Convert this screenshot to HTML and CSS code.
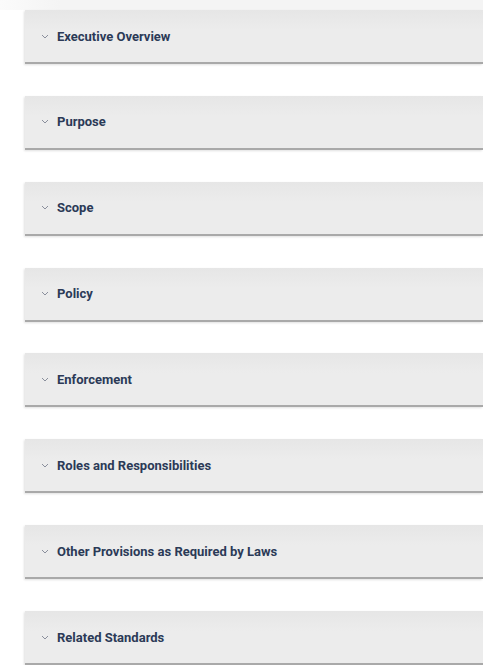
FILE: index.html
```html
<!DOCTYPE html>
<html lang="en">
<head>
<meta charset="utf-8">
<link rel="stylesheet" href="styles.css">
</head>
<body>
<div class="topshade"></div>
<div class="list">
  <div class="item"><span class="chev"><svg width="8" height="5" viewBox="0 0 8 5"><path d="M1 1l3 3 3-3" fill="none" stroke="#8a8f9c" stroke-width="1"/></svg></span><span class="title">Executive Overview</span></div>
  <div class="item"><span class="chev"><svg width="8" height="5" viewBox="0 0 8 5"><path d="M1 1l3 3 3-3" fill="none" stroke="#8a8f9c" stroke-width="1"/></svg></span><span class="title">Purpose</span></div>
  <div class="item"><span class="chev"><svg width="8" height="5" viewBox="0 0 8 5"><path d="M1 1l3 3 3-3" fill="none" stroke="#8a8f9c" stroke-width="1"/></svg></span><span class="title">Scope</span></div>
  <div class="item"><span class="chev"><svg width="8" height="5" viewBox="0 0 8 5"><path d="M1 1l3 3 3-3" fill="none" stroke="#8a8f9c" stroke-width="1"/></svg></span><span class="title">Policy</span></div>
  <div class="item"><span class="chev"><svg width="8" height="5" viewBox="0 0 8 5"><path d="M1 1l3 3 3-3" fill="none" stroke="#8a8f9c" stroke-width="1"/></svg></span><span class="title">Enforcement</span></div>
  <div class="item"><span class="chev"><svg width="8" height="5" viewBox="0 0 8 5"><path d="M1 1l3 3 3-3" fill="none" stroke="#8a8f9c" stroke-width="1"/></svg></span><span class="title">Roles and Responsibilities</span></div>
  <div class="item"><span class="chev"><svg width="8" height="5" viewBox="0 0 8 5"><path d="M1 1l3 3 3-3" fill="none" stroke="#8a8f9c" stroke-width="1"/></svg></span><span class="title">Other Provisions as Required by Laws</span></div>
  <div class="item"><span class="chev"><svg width="8" height="5" viewBox="0 0 8 5"><path d="M1 1l3 3 3-3" fill="none" stroke="#8a8f9c" stroke-width="1"/></svg></span><span class="title">Related Standards</span></div>
</div>
</body>
</html>
```
FILE: styles.css
```css
html, body {
  margin: 0;
  padding: 0;
  background: #ffffff;
  overflow: hidden;
}
body {
  font-family: Roboto, "Liberation Sans", Arial, sans-serif;
  width: 483px;
  height: 665px;
}
.topshade {
  height: 10px;
  background: linear-gradient(to right, #fbfbfb 0px, #f4f4f4 60px, #f4f4f4 100%);
}
.list {
  display: flex;
  flex-direction: column;
  gap: 31.86px;
  padding-left: 25px;
}
.item {
  height: 52px;
  background: linear-gradient(to bottom, #e6e6e6 0px, #ececec 20px, #ececec 100%);
  border-bottom: 2px solid #a9a9a9;
  box-shadow: -1px 1px 2px rgba(0,0,0,0.12);
  display: flex;
  align-items: center;
  padding-left: 16px;
}
.chev {
  width: 8px;
  height: 5px;
  display: flex;
  margin-right: 8px;
}
.title {
  font-size: 13px;
  font-weight: 700;
  color: #2b3a57;
}
```
